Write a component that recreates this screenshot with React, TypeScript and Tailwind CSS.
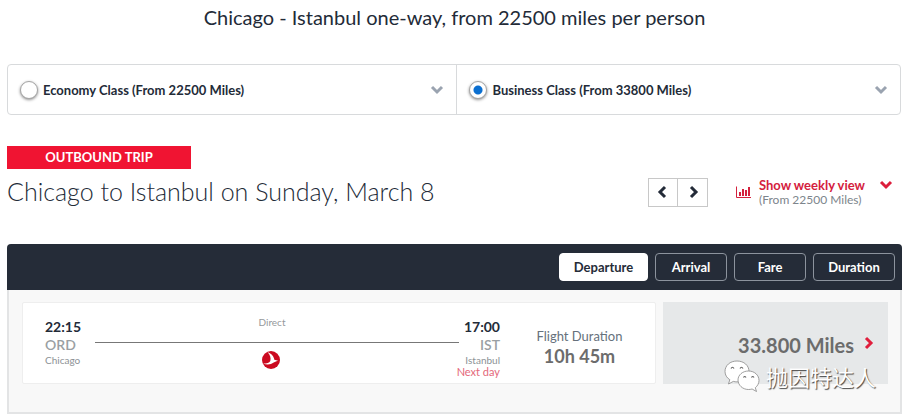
import { useState } from "react";

type ChevronProps = { className?: string; direction?: "down" | "left" | "right" };

const chevronPaths = {
  down: "M2 4l5 5 5-5",
  left: "M9 2L4 7l5 5",
  right: "M5 2l5 5-5 5",
};

function Chevron({ className = "", direction = "down" }: ChevronProps) {
  return (
    <svg viewBox="0 0 14 14" fill="none" stroke="currentColor" strokeWidth="3" className={className} aria-hidden="true">
      <path d={chevronPaths[direction]} />
    </svg>
  );
}

function ChartIcon() {
  return (
    <svg width="15" height="12" viewBox="0 0 15 12" className="text-[#d4213d]" aria-hidden="true">
      <path d="M0.5 0.5v11H15" fill="none" stroke="currentColor" />
      <path d="M3 6h2v4H3zM6 3h2v7H6zM9 4h2v6H9zM12 1h2v9h-2z" fill="currentColor" />
    </svg>
  );
}

function AirlineLogo() {
  return (
    <svg width="18" height="18" viewBox="0 0 18 18" role="img" aria-label="Turkish Airlines">
      <circle cx="9" cy="9" r="9" fill="#cb0a20" />
      <path d="M5.500 1C9.500 2.500 12 5.500 12.300 8.800c1.400.1 2.700.5 4 1.200-1.700 0-3.100.5-4.600 1.600-2.800 2-6.600 2.600-10.700.9 3.600.1 6.300-.7 7.300-2.600C9.200 7 8.200 3.800 5.500 1z" fill="#fff" />
    </svg>
  );
}

function WeChatMark() {
  return (
    <svg width="36" height="32" viewBox="0 0 36 32" aria-hidden="true">
      <g fill="#fff" stroke="#888" strokeWidth="0.800">
        <path d="M13 1C6 1 1 5.500 1 11.500c0 3.500 1.800 6.300 4.800 8.200L4.500 24l4.800-2.600c1.200.3 2.500.5 3.700.5 7 0 12-4.400 12-10.400S20 1 13 1z" />
        <path d="M24.500 11C18.500 11 14 15 14 20s4.500 9.500 10.500 9.500c1.300 0 2.500-.2 3.600-.5l4.400 2.500-1.200-3.800c2.200-1.600 3.700-4.500 3.700-7.200 0-5.300-4.500-9.500-10.500-9.500z" />
      </g>
      <path d="M7 8.500q1.500-2.500 3 0M16 8.500q1.500-2.500 3 0M19.500 17.500q1.200-2 2.500 0M27.500 17.500q1.200-2 2.500 0" fill="none" stroke="#666" strokeWidth="1.200" />
    </svg>
  );
}

const cabins = [
  { id: "economy", label: "Economy Class (From 22500 Miles)" },
  { id: "business", label: "Business Class (From 33800 Miles)" },
];

const sorts = [
  { name: "Departure", width: "w-[89px]" },
  { name: "Arrival", width: "w-[72px]" },
  { name: "Fare", width: "w-[72px]" },
  { name: "Duration", width: "w-[82px]" },
];

export default function App() {
  const [cabin, setCabin] = useState("business");
  const [sort, setSort] = useState("Departure");

  return (
    <main className="bg-white pr-1 pb-1 pl-[7px] font-['Lato','Noto_Sans',sans-serif] text-[#232b38]">
      <h1 className="pt-[3px] text-center text-xl leading-7">Chicago - Istanbul one-way, from 22500 miles per person</h1>

      <fieldset className="mt-[33px] mr-px grid grid-cols-[450fr_443fr] divide-x divide-[#d8dadc] rounded border border-[#d8dadc]">
        {cabins.map((c) => (
          <div key={c.id} className="flex h-[49px] items-center pr-3 pl-3">
            <input
              type="radio"
              id={c.id}
              name="cabin"
              checked={cabin === c.id}
              onChange={() => setCabin(c.id)}
              className="size-[18px] appearance-none rounded-full border border-[#a5a5a5] bg-white shadow-[0_1px_3px_rgba(0,0,0,0.45)] checked:bg-[radial-gradient(circle,#0b6fd0_4px,transparent_5px)]"
            />
            <label htmlFor={c.id} className="flex-1 pl-[5px] text-[13px] leading-5 font-bold">{c.label}</label>
            <button type="button" aria-label={`Details of ${c.id} class`} className="text-[#9aa3b0]">
              <Chevron className="size-3.5" />
            </button>
          </div>
        ))}
      </fieldset>

      <section className="mt-[31px] flex items-end justify-between">
        <div>
          <p className="w-[184px] bg-[#f01432] text-center text-[13px] leading-[23px] font-bold text-white">OUTBOUND TRIP</p>
          <h2 className="mt-1 text-[25px] leading-9 font-light">Chicago to Istanbul on Sunday, March 8</h2>
        </div>
        <div className="flex items-center pr-[9px] pb-0.5">
          <div className="flex divide-x divide-[#c8c8c8] border border-[#c8c8c8]">
            <button type="button" aria-label="Previous day" className="flex h-[27px] w-[29px] items-center justify-center">
              <Chevron direction="left" className="size-3.5" />
            </button>
            <button type="button" aria-label="Next day" className="flex h-[27px] w-[29px] items-center justify-center">
              <Chevron direction="right" className="size-3.5" />
            </button>
          </div>
          <button type="button" className="ml-7 flex items-center text-left">
            <ChartIcon />
            <span className="ml-2 w-[108px] whitespace-nowrap">
              <span className="block text-[13px] leading-4 font-bold text-[#d4213d]">Show weekly view</span>
              <span className="block text-xs leading-[14px] text-[#7d858c]">(From 22500 Miles)</span>
            </span>
            <Chevron className="mb-3.5 ml-3 size-3.5 text-[#dc1e3c]" />
          </button>
        </div>
      </section>

      <section className="mt-[35px]">
        <div className="flex h-[46px] items-center justify-end gap-[7px] rounded-t bg-[#252c38] pr-[7px]">
          {sorts.map((s) => (
            <button
              key={s.name}
              type="button"
              aria-pressed={sort === s.name}
              onClick={() => setSort(s.name)}
              className={`h-7 rounded border text-[13px] leading-5 font-bold ${s.width} ${
                sort === s.name ? "border-white bg-white text-[#252c38]" : "border-[#8c939d] text-white"
              }`}
            >
              {s.name}
            </button>
          ))}
        </div>

        <div className="border-2 border-t-0 border-[#e3e4e5] bg-[#f8f8f8] pt-3 pr-3 pb-7 pl-[13px]">
          <article className="relative flex gap-[7px]">
            <div className="flex h-[82px] flex-1 rounded-xs border border-[#eeeeee] bg-white pt-[15px] pr-8 pl-[22px]">
              <div className="w-[50px]">
                <p className="text-sm leading-[18px] font-bold">22:15</p>
                <p className="text-sm leading-[18px] font-semibold text-[#9a9fa3]">ORD</p>
                <p className="text-[10px] leading-3 text-[#8d9295]">Chicago</p>
              </div>
              <div className="flex flex-1 flex-col items-center">
                <p className="h-[25px] w-full border-b border-[#777] pr-2.5 text-center text-[10px] leading-2 text-[#96999c]">Direct</p>
                <div className="pt-2 pr-3">
                  <AirlineLogo />
                </div>
              </div>
              <div className="w-[41px] text-right">
                <p className="text-sm leading-[18px] font-bold">17:00</p>
                <p className="text-sm leading-[18px] font-semibold text-[#9a9fa3]">IST</p>
                <p className="text-[10px] leading-3 text-[#8d9295]">Istanbul</p>
                <p className="flex justify-end text-[11px] leading-3 whitespace-nowrap text-[#e4687a]">Next day</p>
              </div>
              <div className="ml-9 w-[87px] pt-[9px] text-center whitespace-nowrap">
                <p className="text-[13px] leading-[18px] text-[#66717c]">Flight Duration</p>
                <p className="text-lg leading-[22px] font-bold text-[#6c6c6c]">10h 45m</p>
              </div>
            </div>
            <button type="button" className="flex h-[82px] w-[225px] items-center justify-end gap-[7px] bg-[#e6e8e9] pt-1 pr-[13px] text-xl leading-6 font-bold text-[#6c6c6c]">
              33.800 Miles
              <Chevron direction="right" className="mb-1 size-3.5 text-[#e01e3c]" />
            </button>
            <div className="pointer-events-none absolute right-0 -bottom-2 flex items-center gap-1.5 pr-3">
              <WeChatMark />
              <span className="font-['Noto_Sans_CJK_SC',sans-serif] text-[22px] leading-8 text-white [text-shadow:1px_1px_1px_#444]">抛因特达人</span>
            </div>
          </article>
        </div>
      </section>
    </main>
  );
}
